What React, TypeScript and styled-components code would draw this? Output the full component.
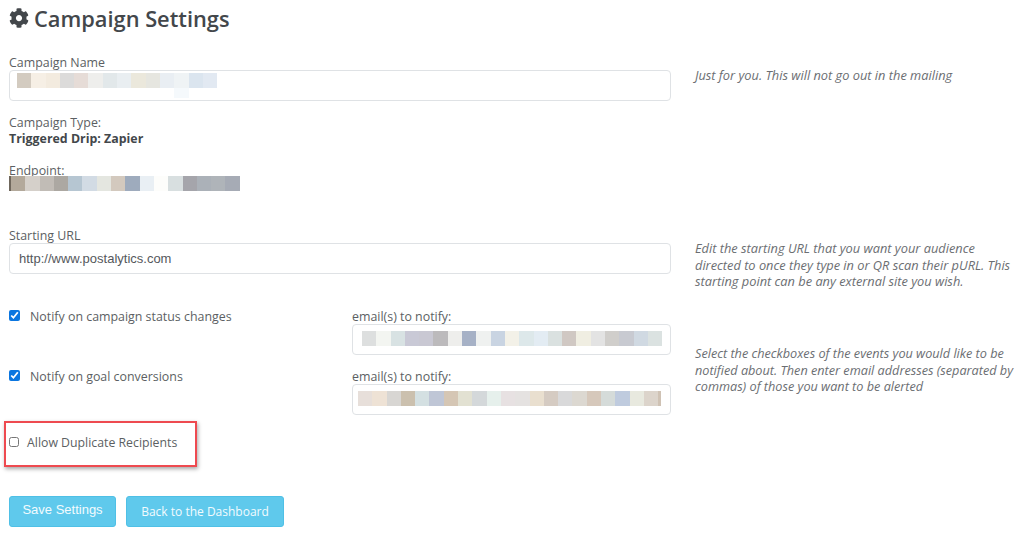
import React from 'react'
import styled, { createGlobalStyle } from 'styled-components'
import { FaCog } from 'react-icons/fa'

const GlobalStyle = createGlobalStyle`
    html, body {
        margin: 0;
        padding: 0;
        background: #fff;
    }
    body {
        font-family: 'Open Sans', 'Noto Sans', sans-serif;
        color: #5c5f63;
        font-size: 12.4px;
    }
`

const Page = styled.div`
    width: 1024px;
    height: 537px;
    overflow: hidden;
    padding: 5px 0 0 9px;
    box-sizing: border-box;
`

const Title = styled.h1`
    display: flex;
    align-items: center;
    gap: 5px;
    height: 26px;
    margin: 0 0 22px;
    font-size: 21.8px;
    font-weight: 600;
    color: #43474b;
    svg {
        width: 20px;
        height: 20px;
    }
`

const Row = styled.div<{ $top?: number; $bottom?: number }>`
    display: grid;
    grid-template-columns: 662px 320px;
    column-gap: 24px;
    margin-top: ${p => p.$top ?? 0}px;
    margin-bottom: ${p => p.$bottom ?? 0}px;
`

const Label = styled.div`
    line-height: 19px;
    height: 17px;
`

const Field = styled.div<{ $pad?: number }>`
    box-sizing: border-box;
    height: 31px;
    border: 1px solid #dfe2e5;
    border-radius: 4px;
    background: #fff;
    display: flex;
    padding-top: ${p => p.$pad ?? 6}px;
`

const UrlField = styled(Field)`
    padding: 0 9px;
    align-items: center;
    font-family: 'Liberation Sans', Arial, sans-serif;
    font-size: 13px;
    color: #55585c;
`

const Note = styled.div<{ $top?: number }>`
    font-style: italic;
    font-size: 12.8px;
    line-height: 16.5px;
    color: #6b6e72;
    padding-top: ${p => p.$top ?? 0}px;
`

const Static = styled.div<{ $top?: number; $height?: number }>`
    line-height: 15px;
    height: ${p => p.$height ?? 15}px;
    margin-top: ${p => p.$top ?? 0}px;
`

const Strong = styled.div`
    font-weight: 700;
    font-size: 12.4px;
    color: #43474b;
    line-height: 17px;
`

const Mosaic = styled.div<{ $left?: number }>`
    display: flex;
    height: 15px;
    margin-left: ${p => p.$left ?? 0}px;
`

const Tile = styled.span<{ $color: string; $width?: number; $under?: boolean }>`
    display: block;
    width: ${p => p.$width ?? 14.3}px;
    height: 100%;
    background: ${p => p.$color};
    box-shadow: ${p => (p.$under ? '0 10px 0 #f5f9fc' : 'none')};
`

const NotifyBlock = styled.div`
    display: grid;
    grid-template-columns: 662px 326px;
    column-gap: 24px;
`

const NotifyRows = styled.div`
    display: flex;
    flex-direction: column;
    gap: 12px;
`

const NotifyRow = styled.div`
    display: grid;
    grid-template-columns: 343px 319px;
`

const NotifyNote = styled(Note)`
    align-self: center;
    padding-top: 19px;
    font-size: 12.68px;
`

const CheckRow = styled.label`
    display: flex;
    align-items: flex-start;
    gap: 10px;
    line-height: 19px;
`

const Check = styled.input`
    width: 11px;
    height: 11px;
    margin: 3px 0 0;
    accent-color: #0b76e0;
`

const Highlight = styled.label`
    display: flex;
    align-items: center;
    gap: 8px;
    box-sizing: border-box;
    width: 193px;
    height: 46px;
    margin: 6px 0 0 -5px;
    padding: 0 0 3px 3px;
    border: 2px solid #ee4a50;
    box-shadow: 1px 2px 4px rgba(0, 0, 0, 0.35);
    font-size: 12.3px;
    white-space: nowrap;
`

const PlainCheck = styled.input`
    width: 10px;
    height: 10px;
    margin: 0;
`

const Buttons = styled.div`
    display: flex;
    gap: 10px;
    margin-top: 29px;
`

const Button = styled.button<{ $width: number; $arial?: boolean }>`
    width: ${p => p.$width}px;
    height: 31px;
    padding: 0 0 ${p => (p.$arial ? 3 : 0)}px;
    border: 1px solid #4fc0e6;
    border-radius: 3px;
    background: #5fc9ec;
    color: #f2fbfe;
    font-family: ${p => (p.$arial ? "'Liberation Sans', Arial, sans-serif" : 'inherit')};
    font-size: ${p => (p.$arial ? 13 : 12)}px;
`

const nameTiles = ['#d3cbc0', '#f6efe5', '#f3ebdf', '#dcdbda', '#e6dcd7', '#eeeeec', '#e2e8ea', '#e9eef1', '#ebe8dc', '#e6e6e0', '#e9eef3', '#eff3f5', '#dbe5ef', '#e2e9f2']
const endpointTiles = ['#b3a99b', '#d5d0ca', '#c1bcb6', '#aca8a2', '#b6c6d2', '#d2dbe4', '#e4e6e0', '#d3c9be', '#9eabbd', '#e9eff4', '#fdfdfb', '#d8dfe0', '#a5a5ab', '#abb1b8', '#afb4b9', '#a6abb5']
const mailOne = ['#dddfdf', '#f3f5f1', '#d8e2e3', '#c9c9d6', '#c9c8d3', '#bcbabc', '#eeeeec', '#a6b1c6', '#eff1f0', '#c9d4e2', '#f3f1e8', '#dde8ea', '#e3ecf3', '#dae1e0', '#d0c8c3', '#f0eee2', '#e3e3e3', '#d0cecb', '#c8cad1', '#d0d9e2', '#dbe2e1']
const mailTwo = ['#e7dfda', '#eee2d5', '#d8d6d3', '#cbc0ae', '#d4e0e2', '#bfc6d6', '#d5c6b4', '#e2e1d2', '#d4d8da', '#e6f0ec', '#e7e1e2', '#e5e2e1', '#e9dfcf', '#d5cbc2', '#d9d9da', '#dcd8d1', '#d6c8bb', '#d5dbd9', '#bfcbde', '#e8e9df', '#dcd4cb']

const App = () => {
    return (
        <>
            <GlobalStyle />
            <Page>
                <Title><FaCog /> Campaign Settings</Title>

                <Row $bottom={14}>
                    <div>
                        <Label>Campaign Name</Label>
                        <Field $pad={2}>
                            <Mosaic $left={7}>
                                {nameTiles.map((c, i) => <Tile key={i} $color={c} $under={i === 11} />)}
                            </Mosaic>
                        </Field>
                    </div>
                    <Note $top={14}>Just for you. This will not go out in the mailing</Note>
                </Row>

                <Static>Campaign Type:</Static>
                <Strong>Triggered Drip: Zapier</Strong>
                <Static $top={16} $height={13}>Endpoint:</Static>
                <Mosaic>
                    <Tile $color="#6f675c" $width={2} />
                    {endpointTiles.map((c, i) => <Tile key={i} $color={c} />)}
                </Mosaic>

                <Row $top={35} $bottom={17}>
                    <div>
                        <Label>Starting URL</Label>
                        <UrlField>http://www.postalytics.com</UrlField>
                    </div>
                    <Note $top={14}>
                        Edit the starting URL that you want your audience directed to once they type in or QR scan their pURL. This starting point can be any external site you wish.
                    </Note>
                </Row>

                <NotifyBlock>
                    <NotifyRows>
                        <NotifyRow>
                            <CheckRow><Check type="checkbox" defaultChecked /> Notify on campaign status changes</CheckRow>
                            <div>
                                <Label>email(s) to notify:</Label>
                                <Field>
                                    <Mosaic $left={9}>
                                        {mailOne.map((c, i) => <Tile key={i} $color={c} />)}
                                    </Mosaic>
                                </Field>
                            </div>
                        </NotifyRow>
                        <NotifyRow>
                            <CheckRow><Check type="checkbox" defaultChecked /> Notify on goal conversions</CheckRow>
                            <div>
                                <Label>email(s) to notify:</Label>
                                <Field>
                                    <Mosaic $left={5}>
                                        {mailTwo.map((c, i) => <Tile key={i} $color={c} />)}
                                        <Tile $color="#cfc2b4" $width={3} />
                                    </Mosaic>
                                </Field>
                            </div>
                        </NotifyRow>
                    </NotifyRows>
                    <NotifyNote>
                        Select the checkboxes of the events you would like to be notified about. Then enter email addresses (separated by commas) of those you want to be alerted
                    </NotifyNote>
                </NotifyBlock>

                <Highlight><PlainCheck type="checkbox" /> Allow Duplicate Recipients</Highlight>

                <Buttons>
                    <Button $width={107} $arial>Save Settings</Button>
                    <Button $width={158}>Back to the Dashboard</Button>
                </Buttons>
            </Page>
        </>
    )
}

export default App
